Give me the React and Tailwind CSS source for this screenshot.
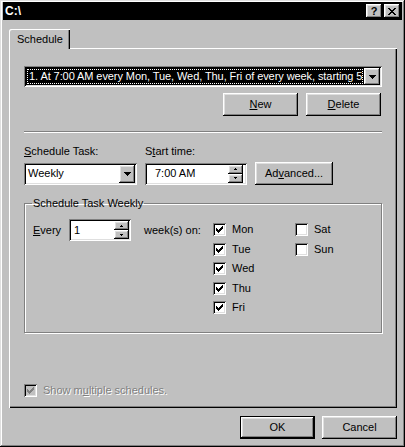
import React from 'react'

const raised = 'shadow-[inset_-1px_-1px_0_#000,inset_1px_1px_0_#fff,inset_-2px_-2px_0_#808080,inset_2px_2px_0_#dfdfdf]'
const sunken = 'shadow-[inset_1px_1px_0_#808080,inset_-1px_-1px_0_#fff,inset_2px_2px_0_#000,inset_-2px_-2px_0_#dfdfdf]'

function DownArrow() {
  return (
    <svg width="7" height="4" viewBox="0 0 7 4" shapeRendering="crispEdges">
      <path d="M0 0h7v1H0z M1 1h5v1H1z M2 2h3v1H2z M3 3h1v1H3z" fill="#000" />
    </svg>
  )
}

function Spin() {
  return (
    <div className="flex flex-col w-[15px] shrink-0">
      <div className={`h-[9px] flex items-center justify-center bg-[#c0c0c0] ${raised}`}>
        <svg width="3" height="2" viewBox="0 0 3 2" shapeRendering="crispEdges">
          <path d="M1 0h1v1H1z M0 1h3v1H0z" fill="#000" />
        </svg>
      </div>
      <div className={`h-[9px] flex items-center justify-center bg-[#c0c0c0] ${raised}`}>
        <svg width="3" height="2" viewBox="0 0 3 2" shapeRendering="crispEdges">
          <path d="M0 0h3v1H0z M1 1h1v1H1z" fill="#000" />
        </svg>
      </div>
    </div>
  )
}

function Check({ checked, disabled }) {
  return (
    <div className={`w-[13px] h-[13px] shrink-0 flex items-center justify-center ${disabled ? 'bg-[#c0c0c0]' : 'bg-white'} ${sunken}`}>
      {checked && (
        <svg width="7" height="7" viewBox="0 0 7 7" shapeRendering="crispEdges">
          <path
            d="M0 2h1v3H0z M1 3h1v3H1z M2 4h1v3H2z M3 3h1v3H3z M4 2h1v3H4z M5 1h1v3H5z M6 0h1v3H6z"
            fill={disabled ? '#808080' : '#000'}
          />
        </svg>
      )}
    </div>
  )
}

function Btn({ children, className = '', isDefault }) {
  return (
    <div
      className={`h-[23px] flex items-center justify-center bg-[#c0c0c0] ${
        isDefault
          ? 'shadow-[inset_0_0_0_1px_#000,inset_-2px_-2px_0_#000,inset_2px_2px_0_#fff,inset_-3px_-3px_0_#808080,inset_3px_3px_0_#dfdfdf]'
          : raised
      } ${className}`}
    >
      {children}
    </div>
  )
}

function Day({ label, checked }) {
  return (
    <div className="h-[19.5px] flex items-center">
      <Check checked={checked} />
      <span className="ml-[6px]">{label}</span>
    </div>
  )
}

export default function App() {
  return (
    <div className="w-[405px] h-[447px] bg-[#c0c0c0] flex flex-col pt-[2px] px-[3px] text-[11px] leading-[13px] text-black font-['Liberation_Sans',Arial,sans-serif] shadow-[inset_-1px_-1px_0_#000,inset_1px_1px_0_#dfdfdf,inset_-2px_-2px_0_#808080,inset_2px_2px_0_#fff]">
      {/* title bar */}
      <div className="h-[18px] bg-black flex items-center pl-[2px] pr-[2px]">
        <span className="text-white font-bold text-[12px]">C:\</span>
        <div className="ml-auto flex gap-[2px]">
          <div className={`w-[16px] h-[14px] flex items-center justify-center font-bold text-[11px] ${raised} bg-[#c0c0c0]`}>?</div>
          <div className={`w-[16px] h-[14px] flex items-center justify-center ${raised} bg-[#c0c0c0]`}>
            <svg width="8" height="7" viewBox="0 0 8 7" shapeRendering="crispEdges">
              <path
                d="M0 0h2v1H0z M6 0h2v1H6z M1 1h2v1H1z M5 1h2v1H5z M2 2h4v1H2z M3 3h2v1H3z M2 4h4v1H2z M1 5h2v1H1z M5 5h2v1H5z M0 6h2v1H0z M6 6h2v1H6z"
                fill="#000"
              />
            </svg>
          </div>
        </div>
      </div>

      {/* tab control */}
      <div className="mt-[9px] ml-[6px] mr-[5px] flex flex-col">
        <div className="flex">
          <div className="relative z-10 -mb-px w-[61px] h-[20px] bg-[#c0c0c0] pl-[8px] flex items-center rounded-tl-[2px] shadow-[inset_1px_1px_0_#fff,inset_-1px_0_0_#000,inset_-2px_0_0_#808080]">
            Schedule
          </div>
        </div>
        <div className="h-[360px] flex flex-col pl-[15px] pr-[15px] pt-[18px] shadow-[inset_1px_1px_0_#fff,inset_-1px_-1px_0_#000,inset_-2px_-2px_0_#808080]">
          {/* schedule list combo */}
          <div className={`h-[21px] flex p-[2px] bg-white ${sunken}`}>
            <div className="flex-1 min-w-0 bg-black p-px">
              <div className="h-full border border-dotted border-white flex items-center pl-px overflow-hidden whitespace-nowrap text-white tracking-[-0.08px]">
                1. At 7:00 AM every Mon, Tue, Wed, Thu, Fri of every week, starting 5/1/2000
              </div>
            </div>
            <div className={`w-[16px] shrink-0 flex items-center justify-center bg-[#c0c0c0] ${raised}`}>
              <DownArrow />
            </div>
          </div>

          <div className="mt-[6px] flex justify-end gap-[8px] pr-px">
            <Btn className="w-[75px]"><span><u>N</u>ew</span></Btn>
            <Btn className="w-[75px]"><span><u>D</u>elete</span></Btn>
          </div>

          <div className="mt-[15px] border-t border-t-[#808080] border-b border-b-white" />

          <div className="mt-[12px] flex">
            <span className="w-[121px]"><u>S</u>chedule Task:</span>
            <span>S<u>t</u>art time:</span>
          </div>

          <div className="mt-[4px] flex items-center">
            <div className={`w-[113px] h-[22px] flex p-[2px] bg-white ${sunken}`}>
              <div className="flex-1 flex items-center pl-[2px]">Weekly</div>
              <div className={`w-[16px] shrink-0 flex items-center justify-center bg-[#c0c0c0] ${raised}`}>
                <DownArrow />
              </div>
            </div>
            <div className={`ml-[8px] w-[102px] h-[22px] flex p-[2px] pr-[4px] bg-white ${sunken}`}>
              <div className="flex-1 flex items-center pl-[8px]">7:00 AM</div>
              <Spin />
            </div>
            <Btn className="ml-[8px] w-[78px]"><span>Ad<u>v</u>anced...</span></Btn>
          </div>

          <fieldset className="mt-[12px] h-[136px] border border-[#808080] shadow-[1px_1px_0_#fff,inset_1px_1px_0_#fff]">
            <legend className="ml-[7px] px-px">Schedule Task Weekly</legend>
            <div className="mt-[9px] pl-[8px] flex items-start">
              <div className="h-[22px] w-[36px] flex items-center"><span><u>E</u>very</span></div>
              <div className={`w-[62px] h-[22px] flex p-[2px] bg-white ${sunken}`}>
                <div className="flex-1 flex items-center pl-[3px]">1</div>
                <Spin />
              </div>
              <div className="ml-[13px] w-[69px] h-[22px] flex items-center">week(s) on:</div>
              <div className="mt-[1px] w-[82px] flex flex-col">
                <Day label="Mon" checked />
                <Day label="Tue" checked />
                <Day label="Wed" checked />
                <Day label="Thu" checked />
                <Day label="Fri" checked />
              </div>
              <div className="mt-[1px] flex flex-col">
                <Day label="Sat" />
                <Day label="Sun" />
              </div>
            </div>
          </fieldset>

          <div className="mt-auto mb-[11px] flex items-center">
            <Check checked disabled />
            <span className="ml-[6px] text-[#808080] [text-shadow:1px_1px_0_#fff]">Show m<u>u</u>ltiple schedules.</span>
          </div>
        </div>
      </div>

      <div className="mt-[8px] mr-[5px] flex justify-end gap-[7px]">
        <Btn isDefault className="w-[75px]">OK</Btn>
        <Btn className="w-[75px]">Cancel</Btn>
      </div>
    </div>
  )
}
